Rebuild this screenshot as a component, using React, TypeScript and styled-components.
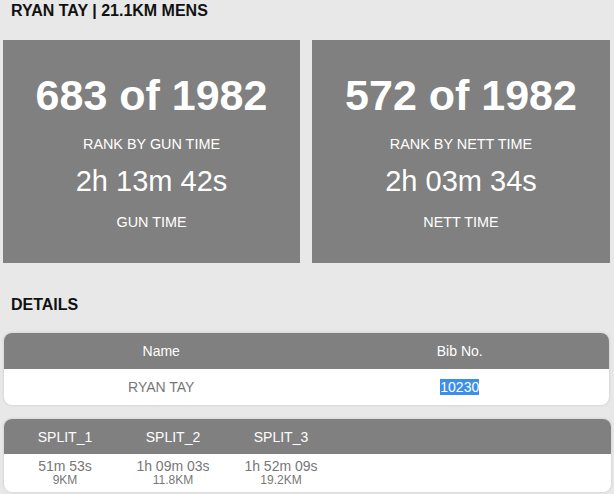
import styled, { createGlobalStyle } from "styled-components";

const GlobalStyle = createGlobalStyle`
	body {
		margin: 0;
		background: #e8e8e8;
		font-family: "Liberation Sans", Arial, sans-serif;
	}
`;

const splits = [
	{ label: "SPLIT_1", time: "51m 53s", dist: "9KM" },
	{ label: "SPLIT_2", time: "1h 09m 03s", dist: "11.8KM" },
	{ label: "SPLIT_3", time: "1h 52m 09s", dist: "19.2KM" },
];

const App = () => {
	return (
		<Page>
			<GlobalStyle />
			<Title>RYAN TAY | 21.1KM MENS</Title>

			<CardRow>
				<Card>
					<BigNumber>683 of 1982</BigNumber>
					<CardLabel>RANK BY GUN TIME</CardLabel>
					<TimeValue>2h 13m 42s</TimeValue>
					<CardLabel>GUN TIME</CardLabel>
				</Card>
				<Card>
					<BigNumber>572 of 1982</BigNumber>
					<CardLabel>RANK BY NETT TIME</CardLabel>
					<TimeValue>2h 03m 34s</TimeValue>
					<CardLabel>NETT TIME</CardLabel>
				</Card>
			</CardRow>

			<SectionTitle>DETAILS</SectionTitle>

			<InfoTable>
				<InfoHead>
					<span>Name</span>
					<span>Bib No.</span>
				</InfoHead>
				<InfoRow>
					<span>RYAN TAY</span>
					<span>
						<Selected>10230</Selected>
					</span>
				</InfoRow>
			</InfoTable>

			<SplitTable>
				<SplitHead>
					{splits.map((s) => (
						<span key={s.label}>{s.label}</span>
					))}
				</SplitHead>
				<SplitRow>
					{splits.map((s) => (
						<SplitCell key={s.label}>
							<SplitTime>{s.time}</SplitTime>
							<SplitDist>{s.dist}</SplitDist>
						</SplitCell>
					))}
				</SplitRow>
			</SplitTable>
		</Page>
	);
};

const Page = styled.div`
	width: 614px;
	min-height: 494px;
	padding-top: 2px;
	box-sizing: border-box;
`;

const Title = styled.h2`
	margin: 0;
	padding-left: 11px;
	font-size: 16px;
	line-height: 18px;
	font-weight: bold;
	color: #111;
`;

const CardRow = styled.div`
	display: grid;
	grid-template-columns: 297px 298px;
	gap: 12px;
	margin-top: 20px;
	padding-left: 3px;
`;

const Card = styled.div`
	height: 223px;
	box-sizing: border-box;
	padding-top: 30px;
	background: #808080;
	color: #fff;
	text-align: center;
	display: flex;
	flex-direction: column;
	align-items: center;
`;

const BigNumber = styled.div`
	font-size: 43px;
	line-height: 50px;
	font-weight: bold;
`;

const CardLabel = styled.div`
	margin-top: 16px;
	font-size: 14.4px;
	line-height: 16px;
`;

const TimeValue = styled.div`
	margin-top: 12px;
	font-size: 29px;
	line-height: 34px;
`;

const SectionTitle = styled.h3`
	margin: 33px 0 0;
	padding-left: 11px;
	font-size: 16px;
	line-height: 18px;
	font-weight: bold;
	color: #111;
`;

const InfoTable = styled.div`
	margin: 19px 5px 0 4px;
	border-radius: 8px;
	overflow: hidden;
	background: #fff;
	box-shadow: 0 0 3px rgba(0, 0, 0, 0.15);
`;

const InfoHead = styled.div`
	display: grid;
	grid-template-columns: 1fr 1fr;
	padding-left: 8px;
	height: 36px;
	align-items: center;
	background: #808080;
	color: #fff;
	font-size: 14px;
	text-align: center;
`;

const InfoRow = styled.div`
	display: grid;
	grid-template-columns: 1fr 1fr;
	padding-left: 8px;
	height: 36px;
	align-items: center;
	color: #777;
	font-size: 14px;
	text-align: center;
`;

const Selected = styled.span`
	background: #3b8eea;
	color: #fff;
`;

const SplitTable = styled.div`
	margin: 14px 3px 0 4px;
	border-radius: 8px;
	overflow: hidden;
	background: #fff;
	box-shadow: 0 0 3px rgba(0, 0, 0, 0.15);
`;

const SplitHead = styled.div`
	display: grid;
	grid-template-columns: repeat(3, 108px);
	padding-left: 7px;
	height: 35px;
	align-items: center;
	background: #808080;
	color: #fff;
	font-size: 14px;
	text-align: center;
`;

const SplitRow = styled.div`
	display: grid;
	grid-template-columns: repeat(3, 108px);
	padding-left: 7px;
	height: 38px;
	align-items: center;
	color: #777;
	text-align: center;
`;

const SplitCell = styled.div`
	display: flex;
	flex-direction: column;
	align-items: center;
`;

const SplitTime = styled.span`
	font-size: 14px;
	line-height: 15px;
`;

const SplitDist = styled.span`
	font-size: 12px;
	line-height: 13px;
`;

export default App;
